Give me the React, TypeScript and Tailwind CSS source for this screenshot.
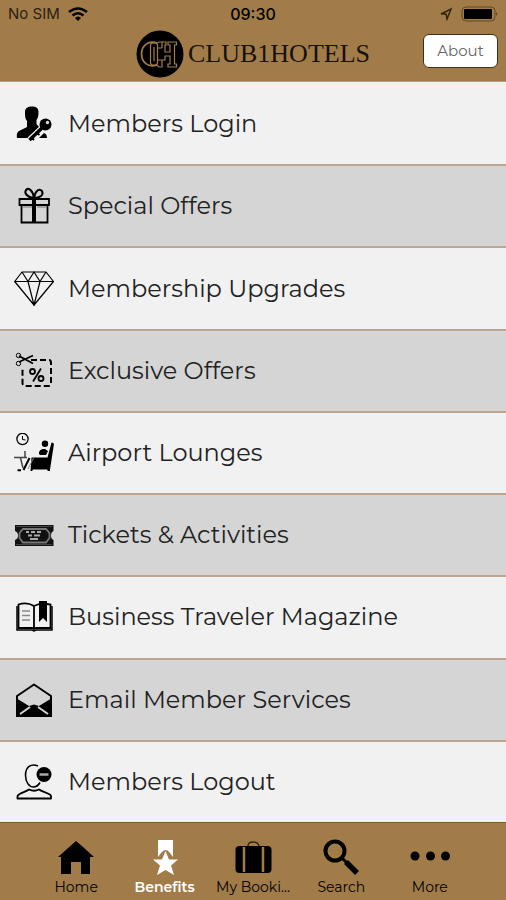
import type { ReactNode } from "react";

const FONT = "font-['Montserrat',Inter,'Open_Sans',sans-serif]";

function MenuIcon({ children }: { children: ReactNode }) {
  return (
    <svg viewBox="0 0 40 40" className="h-10 w-10 shrink-0" fill="none" stroke="#000" strokeWidth="1.5" aria-hidden="true">
      {children}
    </svg>
  );
}

const LoginIcon = () => (
  <MenuIcon>
    <g fill="#000" stroke="none">
      <path d="M11 8C11 4 14 2.500 18 2.500S24.500 4 24.500 8C24.500 12 24 14 22.500 16V20L25 23L14 34H3C2.500 30 3 28 6 26.500L13 23V17C11 15 11 12 11 8Z" />
      <path d="M26 33L30 29Q33 30 33 34H25Z" />
    </g>
    <path d="M29 24L16 36" stroke="#f1f1f1" strokeWidth="7" />
    <circle cx="31.500" cy="20.500" r="6" fill="#000" stroke="none" />
    <path d="M28 24L15.500 36" strokeWidth="3.500" />
    <path d="M18 34L20 36M23 29L25.500 31" strokeWidth="2" />
    <circle cx="33.500" cy="18.500" r="1.700" fill="#ddd" stroke="none" />
  </MenuIcon>
);

const GiftIcon = () => (
  <MenuIcon>
    <path d="M5.500 13H35V19H5.500ZM7.500 19V36.500H33.500V19" strokeWidth="1.800" />
    <path d="M20 13V36" strokeWidth="4" />
    <path d="M19 12C13 11 10 7 12 4C15 1 19 5 20 12C21 5 25 2 28 5C30 9 26 12 20 12" strokeWidth="2" />
    <path d="M9 21H18M23 21H32" stroke="#777" strokeWidth="1" />
  </MenuIcon>
);

const DiamondIcon = () => (
  <MenuIcon>
    <g strokeWidth="1.200" strokeLinejoin="round">
      <path d="M8 3H32L39.500 12.500L20 36L.700 12.500Z" />
      <path d="M.700 12.500H39.500M8 3L14 12.500L20 3L26 12.500L32 3M14 12.500L20 36L26 12.500" />
    </g>
    <path d="M18 33H22L20 37Z" fill="#000" stroke="none" />
  </MenuIcon>
);

const CouponIcon = () => (
  <MenuIcon>
    <path d="M17 9H35Q37 9 37 12V32Q37 35 34 35H12Q8.500 35 8.500 32V18" strokeWidth="2" strokeDasharray="6 3" />
    <path d="M5 5L19 12.500M5 11L19 4.500" strokeWidth="1.800" />
    <circle cx="4.500" cy="4.500" r="2.200" strokeWidth="1" />
    <circle cx="4.500" cy="12.500" r="2.200" strokeWidth="1" />
    <g strokeWidth="1.800">
      <circle cx="18.500" cy="20.500" r="2.500" />
      <circle cx="27" cy="27.500" r="2.500" />
      <path d="M27 17.500L19 30.500" />
    </g>
  </MenuIcon>
);

const LoungeIcon = () => (
  <MenuIcon>
    <circle cx="8.500" cy="6" r="5.600" strokeWidth="1.300" />
    <path d="M8.500 3V6.500L11.500 7" strokeWidth="1" />
    <g fill="#000" stroke="none">
      <circle cx="31" cy="10.800" r="3.200" />
      <path d="M25 21C24.500 17 28 15.500 31 16L34 18L32 22H26Z" />
      <path d="M37.500 9.500Q40.500 9.500 39.800 12L36 36.500V38H33.500V36.500H18.500V38H16.500L17.500 24.500H33.500Z" />
    </g>
    <path d="M0 24.500H13M11 18V24M6.500 25L9 35" stroke="#444" strokeWidth="1.500" />
    <path d="M15.500 25L9.500 37M3.500 37.200H7" strokeWidth="2" />
    <path d="M19.500 25L14 36" stroke="#888" strokeWidth="1" />
  </MenuIcon>
);

const TicketIcon = () => (
  <MenuIcon>
    <path d="M1 10H39.500V16Q37 17 37 20.500T39.500 25V31H1V25Q4 24 4 20.500T1 16Z" fill="#111" stroke="none" />
    <path d="M2 11.500H38M2 29.500H38" stroke="#444" strokeWidth="1" />
    <path d="M9 14H32L35.500 18V23L32 27.500H9L5.500 23V18Z" stroke="#777" strokeWidth="1.800" />
    <path d="M12 17H15M17 17H21M23 17H27M14 20.500H18M20 20.500H26M16 24H24" stroke="#aaa" strokeWidth="1.800" />
  </MenuIcon>
);

const BookIcon = () => (
  <MenuIcon>
    <path d="M20 9C15 6 9 6 4.500 7.500V31H18L20 32L22 31H36.500V7.500L33 7M20 9V32M20 9L25 7" strokeWidth="1.800" />
    <path d="M3 9V33H18L20 34L22 33H38V9" strokeWidth="1.500" />
    <path d="M8 14H16M8 18.500H16M8 23H16" stroke="#888" />
    <path d="M25 4H33V25L29 21L25 25Z" fill="#000" stroke="none" />
  </MenuIcon>
);

const EmailIcon = () => (
  <MenuIcon>
    <path d="M3 36V16L20 4.500L37 16V36Z" strokeWidth="2" strokeLinejoin="round" />
    <path d="M2 18L15 26L20 24.500L25 26L38 18V37H2Z" fill="#000" stroke="none" />
    <path d="M6 34L16 27M34 34L24 27" stroke="#d5d5d5" strokeWidth="2" />
  </MenuIcon>
);

const LogoutIcon = () => (
  <MenuIcon>
    <path d="M24 4C17 1 11.500 5 11.500 13C11.500 20 15 25 19.500 25C22 25 24 24 26 20.500" strokeWidth="1.600" />
    <path d="M3.500 36.500V34C5 31 12 30 15 27.500Q20 30 25 27.500C28 30 36 31 37 34V36.500Z" strokeWidth="1.800" strokeLinejoin="round" />
    <circle cx="30" cy="12.500" r="7.500" fill="#000" stroke="none" />
    <path d="M25.500 12.500H34.500" stroke="#aaa" strokeWidth="2.500" />
  </MenuIcon>
);

const rows = [
  { label: "Members Login", Icon: LoginIcon },
  { label: "Special Offers", Icon: GiftIcon },
  { label: "Membership Upgrades", Icon: DiamondIcon },
  { label: "Exclusive Offers", Icon: CouponIcon },
  { label: "Airport Lounges", Icon: LoungeIcon },
  { label: "Tickets & Activities", Icon: TicketIcon },
  { label: "Business Traveler Magazine", Icon: BookIcon },
  { label: "Email Member Services", Icon: EmailIcon },
  { label: "Members Logout", Icon: LogoutIcon },
];

const tabs = [
  {
    label: "Home",
    art: <path d="M20 2L27 8L38 18H34V35H25V23H15V35H5V18H2Z" fill="#000" />,
  },
  {
    label: "Benefits",
    art: (
      <g fill="#fff">
        <path d="M13 1H28V18L25 14Q21 8 16 14L13 18Z" />
        <path d="M20.500 12L24 20.500H33L26 26.500L29 36L20.500 31L12 36L15 26.500L8 20.500H17Z" />
      </g>
    ),
  },
  {
    label: "My Booki…",
    art: (
      <>
        <path d="M15 7Q15 3 20 3T26 7" fill="none" stroke="#33250f" strokeWidth="1.500" />
        <rect x="2.500" y="7" width="36" height="27" rx="4" fill="#000" />
        <path d="M11 8V33M30 8V33" stroke="#a17c49" strokeWidth="2.500" />
      </>
    ),
  },
  {
    label: "Search",
    art: (
      <g fill="none" stroke="#000">
        <circle cx="14" cy="12" r="9.500" strokeWidth="4" />
        <path d="M21 19L26 24" strokeWidth="3" />
        <path d="M25 23L36 34" strokeWidth="5.500" />
      </g>
    ),
  },
  {
    label: "More",
    art: (
      <g fill="#000">
        <circle cx="5" cy="17" r="4.500" />
        <circle cx="20.500" cy="17" r="4.500" />
        <circle cx="35.500" cy="17" r="4.500" />
      </g>
    ),
  },
];

function StatusBar() {
  return (
    <div className="grid h-7 grid-cols-3 items-center px-2 font-[Inter,sans-serif] leading-7">
      <div className="flex items-center gap-2 text-[#2b2113]">
        <span className="text-[15px]">No SIM</span>
        <svg viewBox="0 0 20 16" className="h-4 w-5" fill="none" stroke="#000" strokeWidth="2.500" aria-hidden="true">
          <path d="M1 6Q10-1 19 6M4.500 9.500Q10 5 15.500 9.500" />
          <path d="M7 12Q10 9 13 12L10 15Z" fill="#000" stroke="none" />
        </svg>
      </div>
      <time className="text-center text-base font-medium">09:30</time>
      <div className="flex items-center justify-end gap-2">
        <svg viewBox="0 0 14 14" className="h-3.5 w-3.5" fill="none" stroke="#33250f" strokeWidth="1.500" aria-hidden="true">
          <path d="M2 7L12 2L8 12L7 7Z" />
        </svg>
        <svg viewBox="0 0 37 16" className="h-4 w-[37px]" aria-hidden="true">
          <rect x="1" y="1" width="33" height="14" rx="4" fill="none" stroke="#604823" strokeWidth="1" />
          <rect x="3" y="3" width="28" height="10" rx="1" fill="#000" />
          <path d="M35 6Q37.500 8 35 10Z" fill="#604823" />
        </svg>
      </div>
    </div>
  );
}

function Brand() {
  return (
    <div className="flex items-center gap-1 pt-0.5">
      <svg viewBox="0 0 48 48" className="h-12 w-12" aria-hidden="true">
        <circle cx="24" cy="24" r="23.500" fill="#000" />
        <g fill="none" stroke="#a17c49" strokeWidth="1.200">
          <path d="M21 13C12 10 5.500 16 5.500 24S12 38 21 35" strokeWidth="1.800" />
          <path d="M21 13L23 12H26V18M21 35L23 37H26V30" />
          <rect x="14.500" y="13" width="7" height="22" rx="2.500" />
          <path d="M18 17V31" />
          <path d="M26 12H30V15H29V22H34V15H32V12H40.500V15H38.500V34H40.500V37H32V34H34V26H29V30H22M22 18H26" />
        </g>
      </svg>
      <h1 className="font-['Liberation_Serif',serif] text-[26px] leading-8 text-[#17100a]">CLUB1HOTELS</h1>
    </div>
  );
}

export default function App() {
  return (
    <div className={`flex min-h-screen flex-col bg-[#f1f1f1] text-black ${FONT}`}>
      <header className="h-[82px] border-b border-[#c99a5b] bg-[#a17c49]">
        <StatusBar />
        <div className="grid grid-cols-[1fr_auto_1fr] items-start px-2">
          <div />
          <Brand />
          <button
            type="button"
            className="mt-1.5 h-[34px] w-[75px] justify-self-end rounded-md border border-[#3d2f1c] bg-white text-[15px] font-normal text-[#666]"
          >
            About
          </button>
        </div>
      </header>

      <main className="flex flex-1 flex-col">
        <ul className="flex flex-1 flex-col">
          {rows.map(({ label, Icon }) => (
            <li key={label} className="flex flex-1 border-t-2 border-[#bda591] odd:bg-[#f1f1f1] even:bg-[#d5d5d5] first:border-[#f1f1f1]">
              <button type="button" className="flex w-full items-center gap-3.5 px-3.5 text-left text-2xl font-normal text-[#222]">
                <Icon />
                {label}
              </button>
            </li>
          ))}
        </ul>
      </main>

      <nav className="h-[78px] border-t border-[#7c5a20] bg-[#a17c49] px-8 pt-4">
        <ul className="grid grid-cols-5">
          {tabs.map(({ label, art }) => (
            <li key={label}>
              <button
                type="button"
                className={`flex w-full flex-col items-center gap-0.5 text-sm leading-4 whitespace-nowrap ${
                  label === "Benefits" ? "font-semibold text-white" : "font-normal text-black"
                }`}
              >
                <svg viewBox="0 0 40 38" className="h-[38px] w-10" aria-hidden="true">
                  {art}
                </svg>
                {label}
              </button>
            </li>
          ))}
        </ul>
      </nav>
    </div>
  );
}
